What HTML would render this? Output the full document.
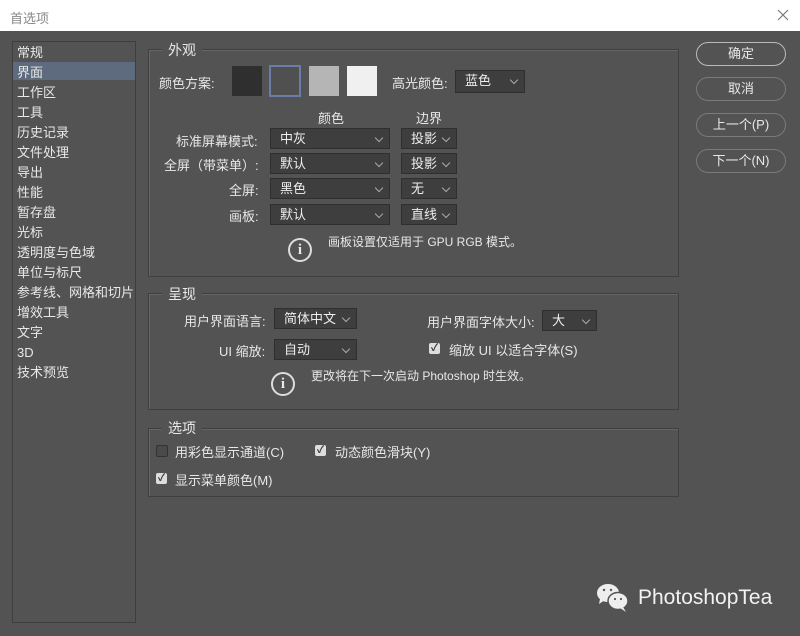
<!DOCTYPE html><html><head><meta charset="utf-8"><style>
body{margin:0;width:800px;height:636px;background:#535353;font-family:"Liberation Sans","Noto Sans CJK SC",sans-serif;font-size:13px;color:#e8e8e8;position:relative;overflow:hidden}
.a{position:absolute;white-space:nowrap}
.title{left:0;top:0;width:800px;height:31px;background:#fff;color:#888;}
.sel{position:absolute;height:21px;background:#3e3e3e;border:1px solid #2f2f2f;box-sizing:border-box;line-height:19px;padding-left:9px;color:#eee}
.sel:after{content:"";position:absolute;right:7px;top:6px;width:5px;height:5px;border-right:1px solid #aaa;border-bottom:1px solid #aaa;transform:rotate(45deg)}
.grp{position:absolute;border:1px solid #3f3f3f;box-shadow:1px 1px 0 #666 inset}
.lg{position:absolute;background:#535353;padding:0 6px;font-size:14px}
.btn{position:absolute;left:696px;width:90px;height:24px;border:1.5px solid #7a7a7a;border-radius:12px;box-sizing:border-box;text-align:center;line-height:21px}
.cb{position:absolute;width:11px;height:11px;background:#ddd;border-radius:2px;color:#333;font-size:10px;line-height:11px;text-align:center;font-weight:bold}
.info{position:absolute;width:20px;height:20px;border:2px solid #ddd;border-radius:50%;text-align:center;line-height:20px;font-weight:bold;font-family:"Liberation Serif",serif;font-size:15px}
.sw{position:absolute;top:66px;width:30px;height:30px}
</style></head><body>
<div class="a title"><span class="a" style="left:10px;top:8px">首选项</span><svg class="a" style="left:777px;top:9px" width="12" height="12"><path d="M1 1L11 11M11 1L1 11" stroke="#777" stroke-width="1.2"/></svg></div>
<div class="a" style="left:12px;top:41px;width:124px;height:582px;border:1px solid #3e3e3e;box-sizing:border-box"></div>
<div class="a" style="left:13px;top:62px;width:122px;height:18px;background:#5e6b7e"></div>
<div class="a" style="left:17px;top:43px;line-height:20px;font-size:13px">常规<br>界面<br>工作区<br>工具<br>历史记录<br>文件处理<br>导出<br>性能<br>暂存盘<br>光标<br>透明度与色域<br>单位与标尺<br>参考线、网格和切片<br>增效工具<br>文字<br>3D<br>技术预览</div>

<div class="grp" style="left:148px;top:49px;width:529px;height:226px"></div>
<div class="lg" style="left:162px;top:40px">外观</div>
<span class="a" style="left:159px;top:73px">颜色方案:</span>
<div class="sw" style="left:232px;background:#2f2f2f"></div>
<div class="sw" style="left:269px;background:#505050;border:2px solid #6a7ca8;box-sizing:border-box;width:32px;height:32px;top:65px"></div>
<div class="sw" style="left:309px;background:#b5b5b5"></div>
<div class="sw" style="left:347px;background:#f0f0f0"></div>
<span class="a" style="left:392px;top:73px">高光颜色:</span>
<div class="sel" style="left:455px;top:70px;width:70px;height:23px">蓝色</div>
<span class="a" style="left:318px;top:108px">颜色</span><span class="a" style="left:416px;top:108px">边界</span>
<span class="a" style="left:176px;top:131px">标准屏幕模式:</span>
<span class="a" style="left:164px;top:155px">全屏（带菜单）:</span>
<span class="a" style="left:229px;top:180px">全屏:</span>
<span class="a" style="left:229px;top:206px">画板:</span>
<div class="sel" style="left:270px;top:128px;width:120px">中灰</div>
<div class="sel" style="left:270px;top:153px;width:120px">默认</div>
<div class="sel" style="left:270px;top:178px;width:120px">黑色</div>
<div class="sel" style="left:270px;top:204px;width:120px">默认</div>
<div class="sel" style="left:401px;top:128px;width:56px">投影</div>
<div class="sel" style="left:401px;top:153px;width:56px">投影</div>
<div class="sel" style="left:401px;top:178px;width:56px">无</div>
<div class="sel" style="left:401px;top:204px;width:56px">直线</div>
<div class="info" style="left:288px;top:238px">i</div>
<span class="a" style="left:328px;top:233px;font-size:12px">画板设置仅适用于 GPU RGB 模式。</span>

<div class="grp" style="left:148px;top:293px;width:529px;height:115px"></div>
<div class="lg" style="left:162px;top:284px">呈现</div>
<span class="a" style="left:184px;top:311px">用户界面语言:</span>
<div class="sel" style="left:274px;top:308px;width:83px">简体中文</div>
<span class="a" style="left:427px;top:312px">用户界面字体大小:</span>
<div class="sel" style="left:542px;top:310px;width:55px">大</div>
<span class="a" style="left:219px;top:341px">UI 缩放:</span>
<div class="sel" style="left:274px;top:339px;width:83px">自动</div>
<div class="cb" style="left:429px;top:343px">✓</div>
<span class="a" style="left:449px;top:340px">缩放 UI 以适合字体(S)</span>
<div class="info" style="left:271px;top:372px">i</div>
<span class="a" style="left:311px;top:367px;font-size:12px">更改将在下一次启动 Photoshop 时生效。</span>

<div class="grp" style="left:148px;top:428px;width:529px;height:67px"></div>
<div class="lg" style="left:162px;top:418px">选项</div>
<div class="cb" style="left:156px;top:445px;background:#4a4a4a;border:1px solid #333;width:10px;height:10px"></div>
<span class="a" style="left:175px;top:442px">用彩色显示通道(C)</span>
<div class="cb" style="left:315px;top:445px">✓</div>
<span class="a" style="left:335px;top:442px">动态颜色滑块(Y)</span>
<div class="cb" style="left:156px;top:473px">✓</div>
<span class="a" style="left:175px;top:470px">显示菜单颜色(M)</span>

<div class="btn" style="top:42px;border-color:#bbb">确定</div>
<div class="btn" style="top:77px">取消</div>
<div class="btn" style="top:113px">上一个(P)</div>
<div class="btn" style="top:149px">下一个(N)</div>

<svg class="a" style="left:596px;top:582px" width="36" height="32"><ellipse cx="12" cy="11" rx="11" ry="9" fill="#eee"/><path d="M4 17 L3 22 L9 18Z" fill="#eee"/><ellipse cx="22" cy="19" rx="10" ry="8.5" fill="#eee" stroke="#535353" stroke-width="1.5"/><path d="M27 25 L30 30 L24 26Z" fill="#eee"/><circle cx="8" cy="8" r="1.2" fill="#555"/><circle cx="15" cy="8" r="1.2" fill="#555"/><circle cx="19" cy="17" r="1.1" fill="#555"/><circle cx="25" cy="17" r="1.1" fill="#555"/></svg>
<span class="a" style="left:638px;top:586px;font-size:21px;color:#f2f2f2">PhotoshopTea</span>
</body></html>
